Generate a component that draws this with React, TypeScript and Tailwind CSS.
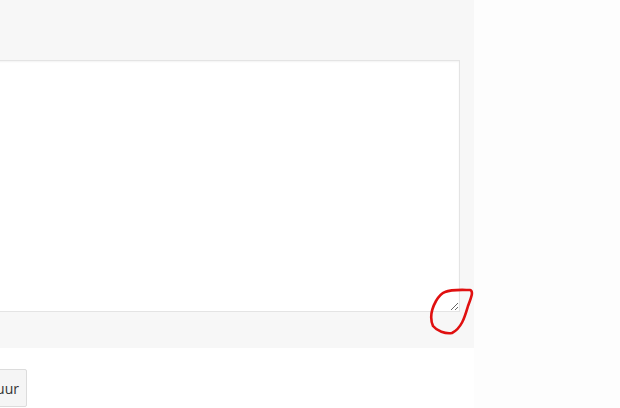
import React from "react";

export default function App() {
  return (
    <div className="relative w-[620px] h-[408px] overflow-hidden bg-[#fdfdfd] flex" style={{ fontFamily: '"Open Sans", "Liberation Sans", sans-serif' }}>
      <div className="w-[474px] flex flex-col">
        <div className="bg-[#f7f7f7] pt-[60px] pb-[36px]">
          <textarea
            className="block ml-[-20px] w-[480px] h-[252px] bg-white border border-[#e4e4e4] shadow-[inset_0_1px_2px_rgba(0,0,0,0.05)] resize outline-none"
            defaultValue=""
          />
        </div>
        <div className="flex-1 bg-white pt-[21px]">
          <div className="w-[27px] flex justify-end">
            <button className="shrink-0 h-[38px] px-[7px] bg-[#f5f5f5] border border-[#dcdcdc] rounded-[2px] text-[14px] text-[#333] whitespace-nowrap">
              Verstuur
            </button>
          </div>
        </div>
      </div>
      <div className="flex-1 bg-[#fdfdfd]" />
      <svg className="absolute left-[428px] top-[286px]" width="48" height="52" viewBox="0 0 48 52" fill="none">
        <path
          d="M17 6 C24 3 36 4 42 4 C46 5 43 12 40 20 C37 30 34 42 24 47 C17 48 9 45 5 40 C2 33 3 24 8 15 C11 10 14 7 17 6 Z"
          stroke="#e01010"
          strokeWidth="2.6"
          strokeLinejoin="round"
        />
      </svg>
    </div>
  );
}
